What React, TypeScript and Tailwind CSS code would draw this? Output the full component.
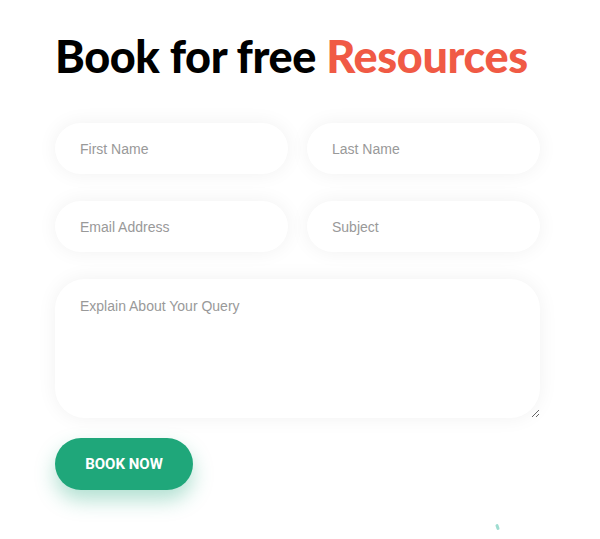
import React from "react";

const field =
  "h-[51px] w-full rounded-full bg-white px-[25px] text-[14px] text-[#333] shadow-[0_0_20px_rgba(0,0,0,0.06)] outline-none placeholder:text-[#999]";

export default function App() {
  return (
    <main className="min-h-[539px] bg-white font-['Liberation_Sans',Arial,sans-serif]">
      <div className="px-[55px] pt-[26px]">
        <h1 className="font-['Lato',sans-serif] text-[45px] font-black leading-[60px] tracking-[-0.4px] text-black">
          Book for free <span className="text-[#f05a45]">Resources</span>
        </h1>

        <form className="mt-[37px] flex w-[485px] flex-col">
          <div className="grid grid-cols-2 gap-x-[19px] gap-y-[27px]">
            <input className={field} placeholder="First Name" />
            <input className={field} placeholder="Last Name" />
            <input className={field} placeholder="Email Address" />
            <input className={field} placeholder="Subject" />
          </div>

          <textarea
            className="mt-[27px] h-[139px] w-full rounded-[30px] bg-white px-[25px] pt-[17px] text-[14px] text-[#333] shadow-[0_0_20px_rgba(0,0,0,0.06)] outline-none placeholder:text-[#999]"
            placeholder="Explain About Your Query"
          />

          <div className="mt-[20px]">
            <button
              type="button"
              className="h-[52px] w-[138px] rounded-full bg-[#1fa77a] font-['Roboto',sans-serif] text-[15px] font-bold uppercase text-white shadow-[0_10px_20px_rgba(31,167,122,0.35)]"
            >
              Book Now
            </button>
          </div>
        </form>
      </div>
      <div className="relative">
        <span className="absolute left-[496px] top-[34px] h-[6px] w-[3px] -rotate-[20deg] rounded-sm bg-[#9fdcd0]" />
      </div>
    </main>
  );
}
